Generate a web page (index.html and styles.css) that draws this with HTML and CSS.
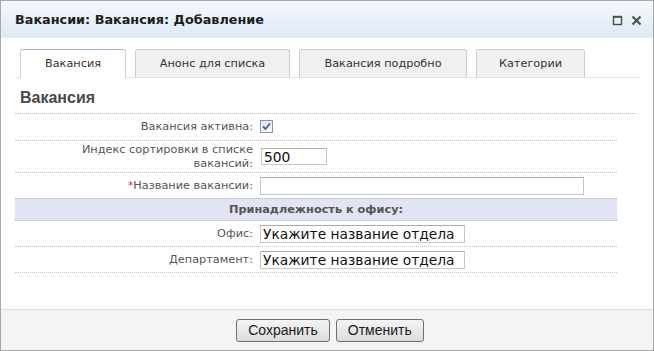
FILE: index.html
```html
<!DOCTYPE html>
<html lang="ru">
<head>
  <meta charset="UTF-8" />
  <title>Вакансии: Вакансия: Добавление</title>
  <link rel="stylesheet" href="styles.css">
</head>
<body>

  <div class="window">
    <div class="titlebar">
      <span class="title">Вакансии: Вакансия: Добавление</span>
      <span class="tools">
        <svg class="tool" width="11" height="11" viewBox="0 0 11 11">
          <rect x="1.5" y="1.5" width="8" height="8" fill="none" stroke="#4d4d4d" stroke-width="1.4"/>
          <line x1="1" y1="2" x2="10" y2="2" stroke="#4d4d4d" stroke-width="1.6"/>
        </svg>
        <svg class="tool" width="11" height="11" viewBox="0 0 11 11">
          <path d="M1.5 1.5 L9.5 9.5 M9.5 1.5 L1.5 9.5" stroke="#4d4d4d" stroke-width="2" fill="none"/>
        </svg>
      </span>
    </div>

    <div class="content">
      <div class="tabs">
        <div class="tab active" style="width:106px">Вакансия</div>
        <div class="tab" style="width:155px">Анонс для списка</div>
        <div class="tab" style="width:168px">Вакансия подробно</div>
        <div class="tab" style="width:109px">Категории</div>
      </div>

      <h2 class="heading">Вакансия</h2>

      <div class="form">
        <div class="row r1">
          <label class="label">Вакансия активна:</label>
          <div class="value">
            <span class="check">
              <svg width="9" height="9" viewBox="0 0 9 9">
                <path d="M1 4.5 L3.5 7 L8 1.5" stroke="#3b5c9e" stroke-width="1.8" fill="none"/>
              </svg>
            </span>
          </div>
        </div>
        <div class="row r2">
          <label class="label">Индекс сортировки в списке<br>вакансий:</label>
          <div class="value"><input class="field small" type="text" value="500"></div>
        </div>
        <div class="row r3">
          <label class="label"><span class="req">*</span>Название вакансии:</label>
          <div class="value"><input class="field wide" type="text" value=""></div>
        </div>
        <div class="band">Принадлежность к офису:</div>
        <div class="row r4">
          <label class="label">Офис:</label>
          <div class="value"><input class="field mid" type="text" value="Укажите название отдела"></div>
        </div>
        <div class="row r5">
          <label class="label">Департамент:</label>
          <div class="value"><input class="field mid" type="text" value="Укажите название отдела"></div>
        </div>
      </div>
    </div>

    <div class="footer">
      <button class="btn">Сохранить</button>
      <button class="btn">Отменить</button>
    </div>
  </div>

</body>
</html>
```

FILE: styles.css
```css
body { margin: 0; font-family: "DejaVu Sans", Verdana, sans-serif; font-size: 11.3px; color: #555; }
.window { width: 654px; height: 351px; box-sizing: border-box; border: 1px solid #a8a8a8; display: flex; flex-direction: column; background: #fff; }

.titlebar { height: 37px; display: flex; align-items: center; justify-content: space-between; padding: 0 11px 0 14px; background: linear-gradient(#f4f8fd, #dce9f6); }
.title { font-weight: bold; font-size: 12.8px; color: #1e1e1e; }
.tools { display: flex; gap: 8px; padding-top: 1px; }
.tool { display: block; }

.content { flex: 1; padding: 11px 13px 0 14px; }
.tabs { display: flex; gap: 9px; padding-left: 5px; border-bottom: 1px solid #e3e3e3; height: 28px; }
.tab { box-sizing: border-box; height: 28px; border: 1px solid #cdcdcd; border-bottom: none; border-radius: 3px 3px 0 0; background: #f0f0f0; color: #333; text-align: center; line-height: 27px; }
.tab.active { background: #fff; height: 29px; border-top-color: #9fb2c8; }

.heading { margin: 0 3px 0 0; padding: 10px 5px 5px; font: bold 16px/20px "Liberation Sans", Arial, sans-serif; color: #4a4a4a; border-bottom: 1px dotted #bdbdbd; }

.form { width: 602px; }
.row { display: grid; grid-template-columns: 245px 1fr; align-items: center; border-bottom: 1px dotted #c2c2c2; }
.r1 { height: 26px; }
.r2 { height: 31px; }
.r3 { height: 25px; border-bottom: none; }
.r4, .r5 { height: 25px; }
.label { text-align: right; padding-right: 7px; line-height: 14px; }
.value { display: flex; align-items: center; }
.req { color: #d23b3b; }

.check { box-sizing: border-box; width: 13px; height: 13px; margin-top: -1px; border: 1px solid #8796ab; background: linear-gradient(#e3e8ef, #fafbfc); display: flex; align-items: center; justify-content: center; }
.check svg { display: block; }

.field { box-sizing: border-box; height: 18px; padding: 0 2px; border: 1px solid #c6c6c6; border-top-color: #aaa; font: 13.8px "DejaVu Sans", Verdana, sans-serif; color: #111; outline: none; }
.field.small { width: 66px; height: 17px; margin-left: 1px; }
.field.wide { width: 324px; }
.field.mid { width: 205px; }

.band { height: 21px; line-height: 21px; text-align: center; font-weight: bold; background: #e1e4f2; border-top: 1px dotted #b7b7c4; border-bottom: 1px dotted #b7b7c4; }

.footer { height: 41px; box-sizing: border-box; border-top: 1px solid #dedede; background: #f4f4f4; display: flex; justify-content: center; align-items: center; gap: 6px; padding-left: 6px; }
.btn { height: 23px; padding: 0 11px; border: 1px solid #707070; border-radius: 3px; background: linear-gradient(#f4f4f4, #dcdcdc); font: 14px "Liberation Sans", Arial, sans-serif; color: #1a1a1a; }
```
